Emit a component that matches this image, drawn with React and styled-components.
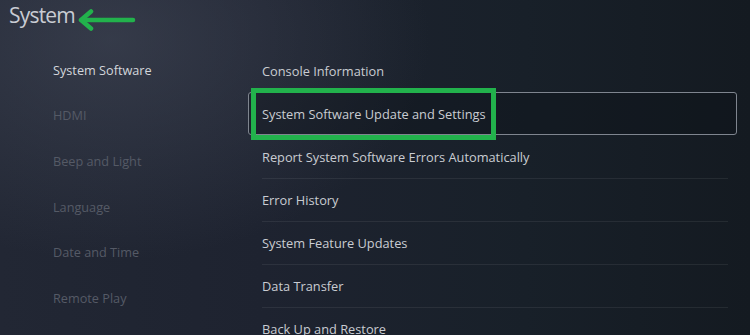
import React from 'react'
import styled, { createGlobalStyle } from 'styled-components'

const GlobalStyle = createGlobalStyle`
  html, body {
    margin: 0;
    padding: 0;
    background: #1b2029;
  }
  * { box-sizing: border-box; }
`

const leftItems = ['System Software', 'HDMI', 'Beep and Light', 'Language', 'Date and Time', 'Remote Play']

const rightItems = [
  'Console Information',
  'System Software Update and Settings',
  'Report System Software Errors Automatically',
  'Error History',
  'System Feature Updates',
  'Data Transfer',
  'Back Up and Restore',
]

const SELECTED = 1

export default function App() {
  return (
    <>
      <GlobalStyle />
      <Screen>
        <Header>
          <Title>System</Title>
          <Arrow width="58" height="22" viewBox="0 0 58 22">
            <path d="M4 11 H55" stroke="#22b24c" strokeWidth="4.5" strokeLinecap="round" fill="none" />
            <path d="M13 2.5 L3 11 L13 19.5" stroke="#22b24c" strokeWidth="4.5" strokeLinecap="round" strokeLinejoin="round" fill="none" />
          </Arrow>
        </Header>

        <Body>
          <Nav>
            {leftItems.map((item, i) => (
              <NavItem key={item} active={i === 0}>{item}</NavItem>
            ))}
          </Nav>

          <List>
            {rightItems.map((item, i) => (
              <Row
                key={item}
                selected={i === SELECTED}
                divider={i > 0 && i !== SELECTED && i !== SELECTED + 1}
              >
                {item}
                {i === SELECTED && <Highlight />}
              </Row>
            ))}
          </List>
        </Body>
      </Screen>
    </>
  )
}

const Screen = styled.div`
  width: 750px;
  height: 335px;
  overflow: hidden;
  font-family: "Open Sans", "Noto Sans", "Liberation Sans", sans-serif;
  background:
    radial-gradient(ellipse 320px 220px at 110px 40px, rgba(70, 76, 92, 0.55), rgba(70, 76, 92, 0) 100%),
    linear-gradient(90deg, #222734 0%, #1e2330 35%, #182029 70%, #141a21 100%);
`

const Header = styled.div`
  height: 47px;
  display: flex;
  align-items: flex-start;
  padding: 1px 0 0 9px;
  gap: 3px;
`

const Title = styled.h1`
  margin: 0;
  font-size: 21px;
  font-weight: 400;
  color: #c9ccd3;
  letter-spacing: -0.8px;
`

const Arrow = styled.svg`
  margin-top: 8px;
`

const Body = styled.div`
  display: grid;
  grid-template-columns: 248px 489px;
`

const Nav = styled.div`
  display: flex;
  flex-direction: column;
  padding-left: 53px;
`

const NavItem = styled.div`
  height: 45.6px;
  display: flex;
  align-items: center;
  font-size: 12.7px;
  color: ${p => (p.active ? '#d3d6db' : '#555a66')};
`

const List = styled.div`
  display: flex;
  flex-direction: column;
  padding-top: 2px;
`

const Row = styled.div`
  position: relative;
  height: 43px;
  display: flex;
  align-items: center;
  font-size: 12.8px;
  color: #c9ccd2;
  border-top: 1px solid ${p => (p.divider ? 'rgba(255, 255, 255, 0.07)' : 'transparent')};
  margin: 0 ${p => (p.selected ? '0' : '9px')} 0 ${p => (p.selected ? '0' : '14px')};
  padding-left: ${p => (p.selected ? '13px' : '0')};
  ${p => p.selected && `
    border: 1.5px solid #7f858f;
    border-radius: 3px;
    background: rgba(12, 16, 22, 0.35);
  `}
`

const Highlight = styled.div`
  position: absolute;
  left: 2px;
  top: -5px;
  width: 245px;
  height: 52px;
  border: 5.5px solid #22b24c;
  pointer-events: none;
`
